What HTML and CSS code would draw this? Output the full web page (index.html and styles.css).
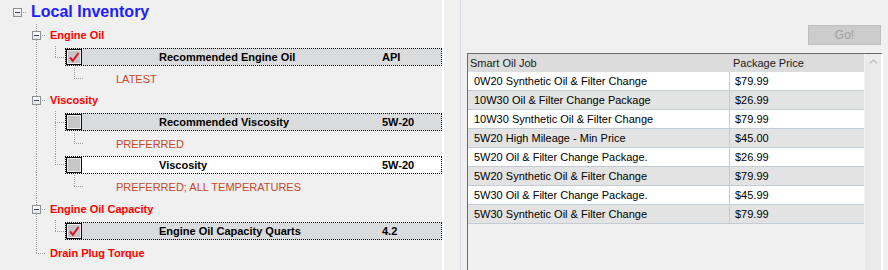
FILE: index.html
```html
<!DOCTYPE html>
<html>
<head>
<meta charset="utf-8">
<link rel="stylesheet" href="styles.css">
</head>
<body>
<div class="app">
  <div class="tree">
    <div class="row root">
      <span class="cell hright boxcell"><span class="tog"></span></span>
      <span class="label title">Local Inventory</span>
    </div>
    <div class="row">
      <span class="cell"></span>
      <span class="cell tee boxcell"><span class="tog"></span></span>
      <span class="label cat">Engine Oil</span>
    </div>
    <div class="row">
      <span class="cell"></span><span class="cell vfull"></span><span class="cell elbow"></span>
      <div class="item gray">
        <span class="chk"><svg width="14" height="14" viewBox="0 0 14 14"><path d="M3 7.5 L5.8 10.8 L11.5 3" fill="none" stroke="#e0142a" stroke-width="2"/></svg></span>
        <span class="name">Recommended Engine Oil</span><span class="val">API</span>
      </div>
    </div>
    <div class="row short">
      <span class="cell"></span><span class="cell vfull"></span><span class="cell"></span><span class="cell elbow"></span>
      <span class="label leaf">LATEST</span>
    </div>
    <div class="row">
      <span class="cell"></span>
      <span class="cell tee boxcell"><span class="tog"></span></span>
      <span class="label cat">Viscosity</span>
    </div>
    <div class="row">
      <span class="cell"></span><span class="cell vfull"></span><span class="cell tee"></span>
      <div class="item gray">
        <span class="chk"></span>
        <span class="name">Recommended Viscosity</span><span class="val">5W-20</span>
      </div>
    </div>
    <div class="row short">
      <span class="cell"></span><span class="cell vfull"></span><span class="cell vfull"></span><span class="cell elbow"></span>
      <span class="label leaf">PREFERRED</span>
    </div>
    <div class="row short">
      <span class="cell"></span><span class="cell vfull"></span><span class="cell elbow"></span>
      <div class="item white">
        <span class="chk"></span>
        <span class="name">Viscosity</span><span class="val">5W-20</span>
      </div>
    </div>
    <div class="row tall">
      <span class="cell"></span><span class="cell vfull"></span><span class="cell"></span><span class="cell elbow"></span>
      <span class="label leaf">PREFERRED; ALL TEMPERATURES</span>
    </div>
    <div class="row">
      <span class="cell"></span>
      <span class="cell tee boxcell"><span class="tog"></span></span>
      <span class="label cat">Engine Oil Capacity</span>
    </div>
    <div class="row">
      <span class="cell"></span><span class="cell vfull"></span><span class="cell elbow"></span>
      <div class="item gray">
        <span class="chk"><svg width="14" height="14" viewBox="0 0 14 14"><path d="M3 7.5 L5.8 10.8 L11.5 3" fill="none" stroke="#e0142a" stroke-width="2"/></svg></span>
        <span class="name">Engine Oil Capacity Quarts</span><span class="val">4.2</span>
      </div>
    </div>
    <div class="row">
      <span class="cell"></span><span class="cell elbow"></span>
      <span class="label cat">Drain Plug Torque</span>
    </div>
  </div>
  <div class="edge"></div>
  <div class="splitter"></div>
  <div class="panel">
    <button class="go">Go!</button>
    <div class="grid">
      <div class="table">
        <div class="ghead">
          <span class="c1">Smart Oil Job</span><span class="c2">Package Price</span>
        </div>
        <div class="gr"><span class="c1">0W20 Synthetic Oil &amp; Filter Change</span><span class="c2">$79.99</span></div>
        <div class="gr alt"><span class="c1">10W30 Oil &amp; Filter Change Package</span><span class="c2">$26.99</span></div>
        <div class="gr"><span class="c1">10W30 Synthetic Oil &amp; Filter Change</span><span class="c2">$79.99</span></div>
        <div class="gr alt"><span class="c1">5W20 High Mileage - Min Price</span><span class="c2">$45.00</span></div>
        <div class="gr"><span class="c1">5W20 Oil &amp; Filter Change Package.</span><span class="c2">$26.99</span></div>
        <div class="gr alt"><span class="c1">5W20 Synthetic Oil &amp; Filter Change</span><span class="c2">$79.99</span></div>
        <div class="gr"><span class="c1">5W30 Oil &amp; Filter Change Package.</span><span class="c2">$45.99</span></div>
        <div class="gr alt"><span class="c1">5W30 Synthetic Oil &amp; Filter Change</span><span class="c2">$79.99</span></div>
      </div>
      <div class="vscroll">
        <svg width="17" height="16" viewBox="0 0 17 16"><path d="M5 9.5 L8.5 6 L12 9.5" fill="none" stroke="#c4c4c4" stroke-width="1.5"/></svg>
      </div>
    </div>
  </div>
</div>
</body>
</html>
```

FILE: styles.css
```css
:root {
  --dotv: repeating-linear-gradient(to bottom, #a0a0a0 0 1px, transparent 1px 2px);
  --doth: repeating-linear-gradient(to right, #a0a0a0 0 1px, transparent 1px 2px);
}
* { box-sizing: border-box; }
html, body {
  margin: 0;
  padding: 0;
  background: #f0f0f0;
  font-family: "Liberation Sans", Arial, sans-serif;
  font-size: 11px;
  color: #000;
}
.app {
  display: flex;
  width: 888px;
  height: 270px;
  overflow: hidden;
}
.tree {
  width: 442px;
  flex: none;
  padding-left: 8px;
  background: #f0f0f0;
}
.edge {
  width: 2px;
  flex: none;
  background: #ffffff;
}
.splitter {
  width: 16px;
  flex: none;
  background: #f0f0f0;
}
.row {
  display: flex;
  align-items: center;
  height: 22px;
}
.row.root { height: 24px; }
.row.short { height: 21px; }
.row.tall { height: 23px; }
.cell {
  width: 19px;
  height: 100%;
  flex: none;
}
.boxcell {
  display: flex;
  align-items: center;
  justify-content: center;
  padding-right: 1px;
}
.vfull { background: var(--dotv) 9px 0 / 1px 100% no-repeat; }
.elbow {
  background: var(--dotv) 9px 0 / 1px 50% no-repeat,
              var(--doth) 9px 50% / 10px 1px no-repeat;
}
.tee {
  background: var(--dotv) 9px 0 / 1px 100% no-repeat,
              var(--doth) 9px 50% / 10px 1px no-repeat;
}
.hright { background: var(--doth) 9px 50% / 10px 1px no-repeat; }
.tog {
  width: 9px;
  height: 9px;
  border: 1px solid #8e8f8f;
  background: linear-gradient(#33415c, #33415c) center / 5px 1px no-repeat,
              linear-gradient(#ffffff, #e4e4e4);
}
.label { white-space: nowrap; }
.title {
  padding-left: 4px;
  font-size: 16px;
  font-weight: bold;
  color: #2020ff;
}
.cat {
  padding-left: 4px;
  font-weight: bold;
  color: #ff0000;
}
.leaf {
  padding-left: 32px;
  color: #c9472a;
}
.item {
  width: 377px;
  height: 18px;
  flex: none;
  display: flex;
  align-items: center;
  border: 1px dotted #000;
  font-weight: bold;
  white-space: nowrap;
}
.item.gray { background: #dadbdc; }
.item.white { background: #ffffff; }
.chk {
  width: 16px;
  height: 16px;
  flex: none;
  display: flex;
  align-items: center;
  justify-content: center;
  border: 1px solid #111;
  background: #c6c6c6;
  box-shadow: inset 0 0 0 1px #ececec;
}
.name {
  margin-left: 77px;
  width: 223px;
}
.val { }
.panel {
  flex: 1;
  display: flex;
  flex-direction: column;
  border-left: 1px solid #d3d9df;
  padding: 25px 5px 0 6px;
}
.go {
  align-self: flex-end;
  margin-right: 2px;
  width: 73px;
  height: 20px;
  padding: 0;
  border: 1px solid #bfbfbf;
  background: #cccccc;
  color: #a0a0a0;
  font-family: "Liberation Sans", Arial, sans-serif;
  font-size: 12px;
}
.grid {
  margin-top: 8px;
  flex: 1;
  display: flex;
  border-top: 1px solid #6a6a6a;
  border-left: 1px solid #6a6a6a;
  border-right: 2px solid #ffffff;
  background: #f1f1f1;
}
.table {
  flex: 1;
  display: flex;
  flex-direction: column;
}
.ghead {
  display: flex;
  height: 18px;
  align-items: center;
  background: #dcdcdc;
  color: #1a1a1a;
}
.ghead .c1 { width: 262px; padding-left: 2px; }
.ghead .c2 { padding-left: 3px; }
.gr {
  display: flex;
  height: 19px;
  border-bottom: 1px solid #c4ccd6;
  background: #ffffff;
  white-space: nowrap;
}
.gr.alt { background: #e3e3e3; }
.gr .c1 {
  width: 262px;
  padding-left: 6px;
  border-right: 1px solid #c4ccd6;
  display: flex;
  align-items: center;
}
.gr .c2 {
  padding-left: 5px;
  display: flex;
  align-items: center;
}
.vscroll {
  width: 17px;
  flex: none;
  background: #eaeaea;
  border-left: 1px solid #f4f4f4;
}
.vscroll svg { display: block; }
```
